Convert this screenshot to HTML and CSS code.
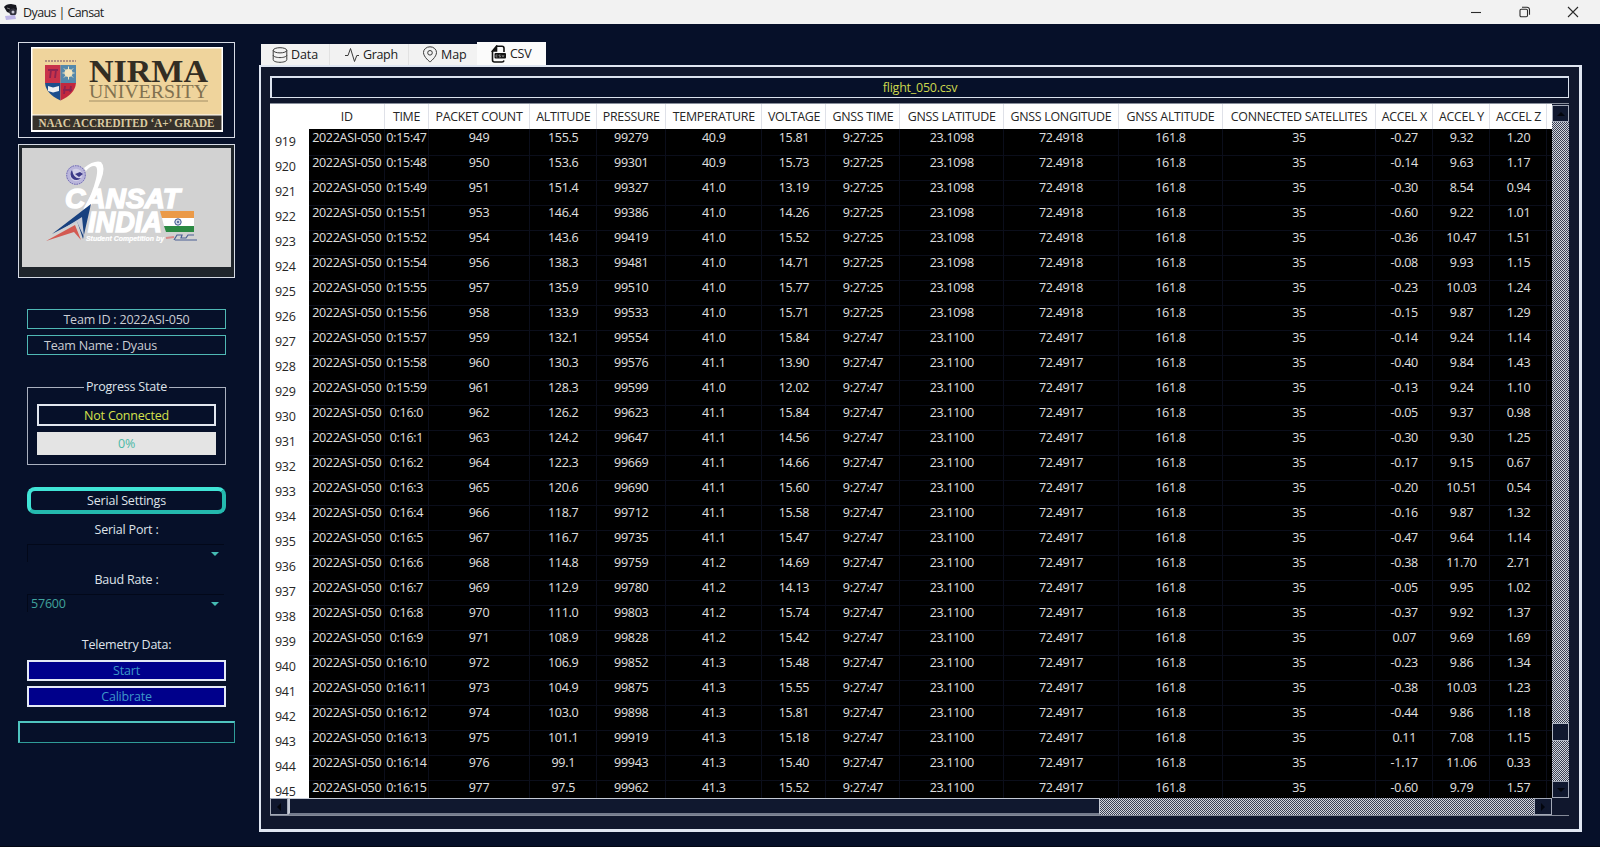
FILE: index.html
```html
<!DOCTYPE html>
<html lang="en">
<head>
<meta charset="utf-8">
<title>Dyaus | Cansat</title>
<link rel="stylesheet" href="styles.css">
</head>
<body>
<header class="titlebar">
  <svg class="app-icon" width="16" height="18" viewBox="0 0 16 18"><path d="M1 4Q3 1 8 1l5 1 1 4-1 3-4 2-5-2z" fill="#15151d"/><path d="M4 5l3 1M8 8l3-2M6 9l6 0" stroke="#777" stroke-width="1"/><circle cx="10" cy="9" r="3.6" fill="#30303c"/><circle cx="10" cy="9" r="1.5" fill="#c8c8d4"/><path d="M2 13l10-1 1 4-10 1z" fill="#bcb4e6"/></svg>
  <span class="app-name">Dyaus | Cansat</span>
  <div class="win-controls">
    <svg width="12" height="12" viewBox="0 0 12 12"><path d="M1 6.500h10" class="ctl"/></svg>
    <svg width="12" height="12" viewBox="0 0 12 12"><rect x="1" y="3.200" width="7.500" height="7.500" rx="1.200" class="ctl"/><path d="M3 1.200h5a2.500 2.500 0 0 1 2.500 2.500v5" class="ctl"/></svg>
    <svg width="12" height="12" viewBox="0 0 12 12"><path d="M1 1l10 10M11 1L1 11" class="ctl"/></svg>
  </div>
</header>
<div class="main">
  <aside class="side">
    <div class="logo-box nirma">
      <svg width="192" height="85" viewBox="0 0 192 85">
        <rect width="192" height="85" fill="#fff"/><rect x="1.5" y="1.5" width="189" height="66" fill="#efd49c"/><rect x="1.5" y="68.5" width="189" height="14.5" fill="#36312b"/>
        <path d="M14 14h31" stroke="#b09080" stroke-width="2" stroke-dasharray="2 1"/>
        <path d="M14 18h15.500v18H14z" fill="#c8324a"/><path d="M29.500 18H45v18H29.500z" fill="#5488ab"/>
        <path d="M14 36h15.500v17.500Q15 47 14 36z" fill="#1c4e8c"/><path d="M29.500 36H45Q44 47 29.500 53.500z" fill="#c2283e"/>
        <path d="M17 23h10M20 23l-1 8M25 23l-1 8M34 39l-1 8M40 39l-1 6M32 43h9" stroke="#8d2350" stroke-width="1.800"/>
        <circle cx="37.500" cy="26" r="4" fill="#f3e5bd"/><path d="M37.500 19.500v13M31.500 26h12M33 21.500l9 9M42 21.500l-9 9" stroke="#f3e5bd"/>
        <path d="M17 39l5 1.500 6-1.500v5l-6 1.500-5-1.500z" fill="#eef0f2"/>
        <text x="58" y="34.500" textLength="119" lengthAdjust="spacingAndGlyphs" class="serif-b" font-size="31" fill="#332d23">NIRMA</text>
        <text x="58" y="50.500" textLength="119" lengthAdjust="spacingAndGlyphs" class="serif" font-size="18.500" fill="#81714f">UNIVERSITY</text>
        <path d="M58 54h119" stroke="#a28e65"/>
        <text x="7.500" y="79.500" textLength="176" lengthAdjust="spacingAndGlyphs" class="serif-b" font-size="11.500" fill="#dccba2">NAAC ACCREDITED ‘A+’ GRADE</text>
      </svg>
    </div>
    <div class="logo-box cansat">
      <svg width="209" height="119" viewBox="0 0 209 119">
        <rect width="209" height="119" fill="#d2d2d2"/>
        <path d="M62 20Q72 12 79 14Q84 19 79 32Q74 47 61 63Q71 44 74 31Q77 18 72 18Q68 18 64 23z" fill="#fff"/>
        <circle cx="54" cy="27" r="10" fill="#b9b5db"/><circle cx="54" cy="27" r="9.300" fill="none" stroke="#6a65ac" stroke-dasharray="1.500 1"/><circle cx="54" cy="27" r="6.200" fill="#d3d0e8"/><path d="M50 22a6 6 0 1 0 9 8q-7 2-9-8M53 26l5-2 3 2-4 3z" fill="#3e3b88"/>
        <text x="43" y="60" textLength="115" lengthAdjust="spacingAndGlyphs" class="heavy" font-size="28">CANSAT</text>
        <text x="66" y="84" textLength="74" lengthAdjust="spacingAndGlyphs" class="heavy" font-size="29">INDIA</text>
        <path d="M69 56L30 86l25-13 6 18z" fill="#18417f"/><path d="M60 69l-24 15 19-10 7 15z" fill="#c6cbd8"/><path d="M24 93l29-16 6 15-7-8z" fill="#d35a52"/>
        <path d="M138 63h34v7h-32z" fill="#eb9a48"/><path d="M140 70h32v8h-30z" fill="#fff"/><path d="M142 78h30v6h-28z" fill="#2b8a43"/><circle cx="156" cy="74" r="3.200" fill="#cdd5e6" stroke="#3d568f"/><circle cx="156" cy="74" r="1" fill="#3d568f"/>
        <text x="64" y="93" textLength="78" lengthAdjust="spacingAndGlyphs" class="heavy small" font-size="6.500">Student Competition by</text>
        <path d="M144 90l8-1" stroke="#d98a8a" stroke-width="2"/><path d="M152 92l3-5h5l-1 3h5l2-3h6M153 92h22" fill="none" stroke="#4b5f93" stroke-width="1.200"/>
      </svg>
    </div>
    <div class="tag team-id">Team ID : 2022ASI-050</div>
    <div class="tag team-name">Team Name : Dyaus</div>
    <fieldset class="progress">
      <legend>Progress State</legend>
      <div class="status">Not Connected</div>
      <div class="bar">0%</div>
    </fieldset>
    <button class="serial">Serial Settings</button>
    <label class="lbl port-lbl">Serial Port :</label>
    <div class="combo"><span></span><i></i></div>
    <label class="lbl baud-lbl">Baud Rate :</label>
    <div class="combo"><span>57600</span><i></i></div>
    <label class="lbl tele-lbl">Telemetry Data:</label>
    <button class="cmd">Start</button>
    <button class="cmd">Calibrate</button>
    <div class="message"></div>
  </aside>
  <section class="work">
    <nav class="tabs">
      <div class="tab t-data"><svg width="16" height="16" viewBox="0 0 16 16"><ellipse cx="8" cy="3.300" rx="6.800" ry="2.600"/><path d="M1.200 3.300v9.400c0 1.500 3 2.600 6.800 2.600s6.800-1.100 6.800-2.600V3.300M1.200 8c0 1.500 3 2.600 6.800 2.600s6.800-1.100 6.800-2.600"/></svg><span>Data</span></div>
      <div class="tab t-graph"><svg width="16" height="16" viewBox="0 0 16 16"><path d="M1 8.500h3l2.500-7 4 13 2.300-6H15"/></svg><span>Graph</span></div>
      <div class="tab t-map"><svg width="16" height="17" viewBox="0 0 16 17"><path d="M8 16S1.500 11 1.500 6.500a6.500 5.700 0 0 1 13 0C14.500 11 8 16 8 16z"/><circle cx="8" cy="6.800" r="2.300"/></svg><span>Map</span></div>
      <div class="tab t-csv"><svg width="16" height="18" viewBox="0 0 16 18"><path d="M5.500 1.200H11a2 2 0 0 1 2 2V7M1.500 6v9a2 2 0 0 0 2 2H11a2 2 0 0 0 2-1.500M1.500 6L5.500 1.200V6z" class="bold"/><path d="M1.500 6l4-4.800V6z" class="solid"/><rect x="3.500" y="8" width="11.500" height="5.500" rx="1" class="solid"/><path d="M6.500 10H5v2h1.500M9.500 10H8v1h1.500v1H8M11 10l1 2 1-2" class="mark"/></svg><span>CSV</span></div>
    </nav>
    <div class="panel">
      <div class="file">flight_050.csv</div>
      <div class="grid-area">
        <div class="table" id="table"></div>
        <div class="vscroll"><b class="btn up"></b><b class="dither"></b><b class="thumb"></b><b class="dither low"></b><b class="btn down"></b></div>
        <div class="hscroll"><b class="btn left"></b><b class="slider"></b><b class="dither"></b><b class="btn right"></b></div>
        <div class="corner"></div>
      </div>
    </div>
  </section>
</div>
<script src="table.js"></script>
</body>
</html>
```
FILE: table.js
```js
const heads = ["", "ID", "TIME", "PACKET COUNT", "ALTITUDE", "PRESSURE", "TEMPERATURE", "VOLTAGE", "GNSS TIME", "GNSS LATITUDE", "GNSS LONGITUDE", "GNSS ALTITUDE", "CONNECTED SATELLITES", "ACCEL X", "ACCEL Y", "ACCEL Z", ""];
// time, packet, altitude, pressure, temperature, voltage, accel x, y, z
const data = `0:15:47 949 155.5 99279 40.9 15.81 -0.27 9.32 1.20
0:15:48 950 153.6 99301 40.9 15.73 -0.14 9.63 1.17
0:15:49 951 151.4 99327 41.0 13.19 -0.30 8.54 0.94
0:15:51 953 146.4 99386 41.0 14.26 -0.60 9.22 1.01
0:15:52 954 143.6 99419 41.0 15.52 -0.36 10.47 1.51
0:15:54 956 138.3 99481 41.0 14.71 -0.08 9.93 1.15
0:15:55 957 135.9 99510 41.0 15.77 -0.23 10.03 1.24
0:15:56 958 133.9 99533 41.0 15.71 -0.15 9.87 1.29
0:15:57 959 132.1 99554 41.0 15.84 -0.14 9.24 1.14
0:15:58 960 130.3 99576 41.1 13.90 -0.40 9.84 1.43
0:15:59 961 128.3 99599 41.0 12.02 -0.13 9.24 1.10
0:16:0 962 126.2 99623 41.1 15.84 -0.05 9.37 0.98
0:16:1 963 124.2 99647 41.1 14.56 -0.30 9.30 1.25
0:16:2 964 122.3 99669 41.1 14.66 -0.17 9.15 0.67
0:16:3 965 120.6 99690 41.1 15.60 -0.20 10.51 0.54
0:16:4 966 118.7 99712 41.1 15.58 -0.16 9.87 1.32
0:16:5 967 116.7 99735 41.1 15.47 -0.47 9.64 1.14
0:16:6 968 114.8 99759 41.2 14.69 -0.38 11.70 2.71
0:16:7 969 112.9 99780 41.2 14.13 -0.05 9.95 1.02
0:16:8 970 111.0 99803 41.2 15.74 -0.37 9.92 1.37
0:16:9 971 108.9 99828 41.2 15.42 0.07 9.69 1.69
0:16:10 972 106.9 99852 41.3 15.48 -0.23 9.86 1.34
0:16:11 973 104.9 99875 41.3 15.55 -0.38 10.03 1.23
0:16:12 974 103.0 99898 41.3 15.81 -0.44 9.86 1.18
0:16:13 975 101.1 99919 41.3 15.18 0.11 7.08 1.15
0:16:14 976 99.1 99943 41.3 15.40 -1.17 11.06 0.33
0:16:15 977 97.5 99962 41.3 15.52 -0.60 9.79 1.57`.split("\n").map(l => l.split(" "));
const row = (cells, cls) => `<div class="row ${cls}">${cells.map(c => `<div class="cell"><span>${c}</span></div>`).join("")}</div>`;
document.getElementById("table").innerHTML = row(heads, "head") + data.map((d, i) => {
  const fix = i < 8 ? ["9:27:25", "23.1098", "72.4918"] : ["9:27:47", "23.1100", "72.4917"];
  return row([919 + i, "2022ASI-050", ...d.slice(0, 6), ...fix, "161.8", "35", ...d.slice(6), ""], "");
}).join("");
```
FILE: styles.css
```css
* { box-sizing: border-box; }
body { margin: 0; width: 1600px; height: 847px; overflow: hidden; background: #061029; font: 12.5px/16px "Open Sans", "Noto Sans", sans-serif; letter-spacing: -.2px; color: #dfe3ea; border-bottom: 1px solid #030714; }
button { font: inherit; letter-spacing: inherit; padding: 0; margin: 0; }
svg { display: block; flex: none; }

.titlebar { height: 24px; background: #f2f2f2; color: #1d1d1d; display: flex; align-items: center; padding: 0 21px 0 3px; }
.app-name { margin-left: 4px; letter-spacing: -.6px; padding-top: 1px; }
.win-controls { margin-left: auto; display: flex; gap: 36.5px; }
.ctl { fill: none; stroke: #2b2b2b; stroke-width: 1.1; }

.main { display: flex; height: 822px; }
.side { width: 259px; flex: none; padding: 18px 24px 0 18px; display: flex; flex-direction: column; }
.logo-box { border: 1px solid #d6dbe5; flex: none; }
.nirma { height: 96px; padding: 4px 0 0 12px; }
.cansat { height: 134px; margin-top: 6px; padding: 3px; background: #1f252b; }
.serif { font-family: "Liberation Serif", serif; letter-spacing: 0; }
.serif-b { font-family: "Liberation Serif", serif; font-weight: bold; letter-spacing: 0; }
.heavy { font-family: "Liberation Sans", sans-serif; font-weight: bold; font-style: italic; fill: #fff; stroke: #fff; stroke-width: 1.5; letter-spacing: 0; }
.small { stroke-width: .2; }

.tag { margin: 0 9px; height: 20px; border: 1px solid #4fb8b4; line-height: 19px; flex: none; color: #cbced4; }
.team-id { margin-top: 31px; text-align: center; }
.team-name { margin-top: 6px; padding-left: 16px; }
.progress { margin: 24px 9px 0; height: 86px; border: 1px solid #a9b0bf; padding: 9px 9px 0; min-width: 0; flex: none; }
.progress legend { margin: 0 auto; padding: 0 2px; color: #dfe3ea; height: 16px; }
.status { height: 22px; border: 2px solid #e2e7ef; color: #d5e04c; text-align: center; line-height: 19px; }
.bar { height: 23px; margin-top: 6px; background: #e4e4e4; color: #4bb9a6; text-align: center; line-height: 23px; }
.serial { margin: 22px 9px 0; height: 27px; flex: none; border: 4px solid; border-color: #40e4d6 #24b9ae #24b9ae #40e4d6; border-radius: 8px; background: #061029; color: #dfe3ea; line-height: 20px; }
.lbl { text-align: center; height: 16px; flex: none; }
.port-lbl { margin-top: 8px; }
.baud-lbl { margin-top: 10px; }
.tele-lbl { margin-top: 25px; }
.combo { margin: 6px 11px 0 9px; height: 18px; flex: none; border-top: 1px solid #020819; border-left: 1px solid #020819; display: flex; align-items: center; justify-content: space-between; padding: 1px 5px 0 3px; color: #40a39d; }
.port-lbl + .combo { margin-top: 6px; }
.combo i { border: 4.5px solid transparent; border-top: 4px solid #45bcb4; border-bottom: 0; }
.cmd { margin: 5px 9px 0; height: 21px; flex: none; border: 2px solid #e4e9f5; background: #00008b; color: #3d97c8; line-height: 18px; }
.tele-lbl + .cmd { margin-top: 7px; height: 21px; }
.message { height: 22px; margin-top: 14px; border: 2px solid #2f9c98; border-width: 2px 1px 1px 2px; border-top-color: #4fc4c0; border-left-color: #4fc4c0; flex: none; }

.work { width: 1323px; padding-top: 18px; display: flex; flex-direction: column; flex: none; }
.tabs { height: 23px; padding-left: 2px; display: flex; align-items: flex-end; color: #202020; flex: none; }
.tab { height: 21px; background: #f2f2f2; display: flex; align-items: center; border-right: 1px solid #e2e2e2; line-height: 20px; letter-spacing: -.1px; }
.tab svg { fill: none; stroke: #3a3a3a; stroke-width: 1; }
.tab span { margin-left: 3px; padding-top: 1px; }
.tab .bold { stroke: #111; stroke-width: 1.6; }
.tab .solid { fill: #151515; stroke: none; }
.tab .mark { stroke: #999; stroke-width: .7; }
.t-data { width: 69px; padding-left: 11px; }
.t-graph { width: 79px; padding-left: 14px; letter-spacing: -.35px; }
.t-map { width: 68px; padding-left: 13px; border: 0; }
.t-csv { width: 69px; height: 23px; padding-left: 14px; background: #fbfbfb; border: 0; letter-spacing: -.3px; }
.panel { height: 767px; flex: none; background: #10172d; border: 2px solid #dfe6f2; border-right-width: 3px; border-bottom-width: 3px; padding: 9px 10px 0 9px; }
.file { height: 22px; border: 2px solid #dbe2ee; border-width: 2px 1px 1px 2px; background: #061029; color: #cdd84e; text-align: center; line-height: 19px; letter-spacing: -.25px; }
.grid-area { margin-top: 5px; height: 712px; display: grid; grid-template: 694px 18px / 1282px 17px; border-top: 1px solid #888e9b; }
.table { background: #000; overflow: hidden; }
.row { display: grid; height: 25px; grid-template-columns: 39px 75.500px 44px 101px 67.500px 68.500px 96.500px 64px 74px 103.500px 115px 104px 153px 57.500px 57px 57px 1fr; }
.row.head { height: 25px; background: #fff; color: #262626; font-size: 12.4px; }
.cell { border-right: 1px solid #0b0e1b; border-bottom: 1px solid #0b0e1b; text-align: center; white-space: nowrap; line-height: 18px; color: #e0e0e0; letter-spacing: -.28px; display: flex; justify-content: center; padding-left: 1px; }
.head .cell { border-color: #dfe1e8; border-bottom: 0; color: #262626; line-height: 26px; }
.cell:first-child { background: #fff; color: #262626; border-color: #fff; line-height: 26px; justify-content: flex-start; padding-left: 5px; }
.cell:last-child { border-right: 0; }
.vscroll { display: grid; grid-template-rows: 17px 601px 18px 40px 17px; padding-top: 1px; }
.hscroll { display: grid; grid-template-columns: 18px 812px 434px 18px; border-bottom: 1px solid #858b99; }
.dither { background: repeating-conic-gradient(#d4d6dc 0 25%, #3a4054 0 50%) 0 0 / 2px 2px; }
.btn { border: 1px solid #a3a9b7; background: #10182f; display: grid; place-items: center; }
.btn::after { content: ""; border: 4px solid transparent; }
.up::after { border-bottom-color: #02050d; border-top: 0; }
.down::after { border-top-color: #02050d; border-bottom: 0; }
.left::after { border-right-color: #02050d; border-left: 0; }
.right::after { border-left-color: #02050d; border-right: 0; }
.thumb { border: 1px solid #b0b6c3; background: #10182f; }
.slider { border: 1px solid #c5cad5; border-left: 2px solid #c5cad5; border-bottom: 2px solid #747b8d; background: #10182f; }
.corner { border-bottom: 1px solid #858b99; }
```
